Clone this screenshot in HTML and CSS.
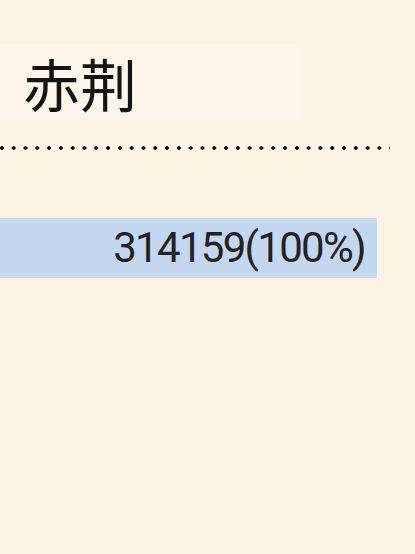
FILE: index.html
```html
<!DOCTYPE html>
<html lang="zh">
<head>
<meta charset="utf-8">
<link rel="stylesheet" href="styles.css">
</head>
<body>
<div class="page">
  <div class="title-box"><span class="title">赤荆</span></div>
  <div class="dots"></div>
  <div class="bar"><span class="value">314159(100%)</span></div>
</div>
</body>
</html>
```
FILE: styles.css
```css
html, body {
  margin: 0;
  padding: 0;
  background: #fcf3e3;
}
.page {
  width: 415px;
  height: 554px;
  display: flex;
  flex-direction: column;
  overflow: hidden;
}
.title-box {
  margin-top: 44px;
  width: 303px;
  height: 76px;
  box-sizing: border-box;
  padding-left: 23px;
  display: flex;
  align-items: center;
  background: #fcf5e8;
}
.title {
  font-family: "Noto Sans CJK SC", "Noto Sans", sans-serif;
  font-size: 57px;
  line-height: 1;
  color: #141414;
}
.dots {
  margin-top: 26px;
  width: 390px;
  height: 4px;
  background-image: radial-gradient(circle, #111 1.6px, transparent 2.1px);
  background-size: 11.8px 4px;
  background-position: -4px 0;
}
.bar {
  margin-top: 68px;
  width: 377px;
  height: 60px;
  box-sizing: border-box;
  padding-right: 12px;
  display: flex;
  justify-content: flex-end;
  align-items: center;
  background: #c3d7ef;
}
.value {
  font-family: Roboto, "Noto Sans", sans-serif;
  font-size: 42px;
  font-weight: 400;
  letter-spacing: -1.7px;
  line-height: 1;
  color: #222;
}
```
